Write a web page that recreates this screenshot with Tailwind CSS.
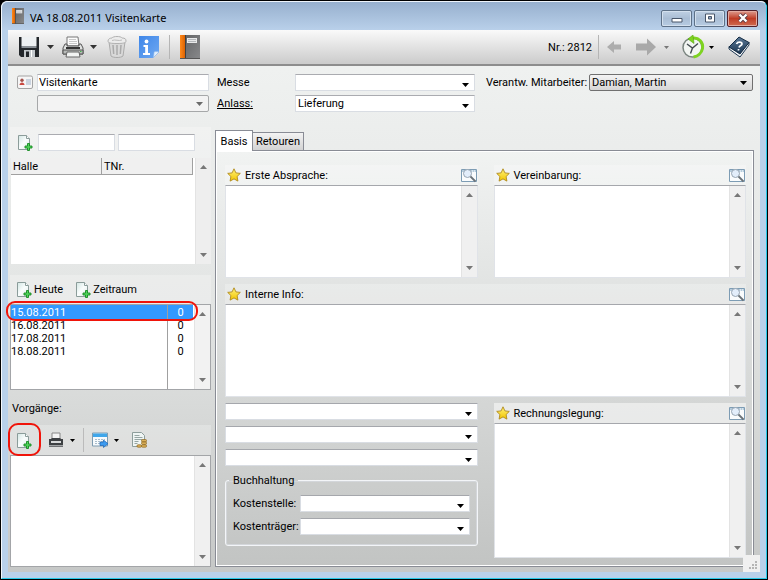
<!DOCTYPE html>
<html lang="de">
<head>
<meta charset="utf-8">
<title>VA 18.08.2011 Visitenkarte</title>
<script src="https://cdn.jsdelivr.net/npm/@tailwindcss/browser@4"></script>
</head>
<body class="bg-black font-[Roboto,'Liberation_Sans',sans-serif] text-[11px] leading-[13px] text-black">
<svg class="absolute h-0 w-0" aria-hidden="true">
  <defs>
    <linearGradient id="paper" x1="0" y1="0" x2="1" y2="1"><stop offset="0" stop-color="#d3e6e3"/><stop offset=".5" stop-color="#fafdfd"/><stop offset="1" stop-color="#dfeae8"/></linearGradient>
    <linearGradient id="gold" x1="0" y1="0" x2="0" y2="1"><stop offset="0" stop-color="#fff27a"/><stop offset="1" stop-color="#f2c500"/></linearGradient>
    <linearGradient id="orange" x1="0" y1="0" x2="1" y2="0"><stop offset="0" stop-color="#ff8a1c"/><stop offset="1" stop-color="#d95f00"/></linearGradient>
    <linearGradient id="grey" x1="0" y1="0" x2="1" y2="1"><stop offset="0" stop-color="#636466"/><stop offset="1" stop-color="#88898b"/></linearGradient>
    <linearGradient id="navy" x1="0" y1="0" x2="0" y2="1"><stop offset="0" stop-color="#5b7997"/><stop offset="1" stop-color="#1b3550"/></linearGradient>
    <linearGradient id="info" x1="0" y1="0" x2="1" y2="1"><stop offset="0" stop-color="#3e86e8"/><stop offset="1" stop-color="#6fa9f2"/></linearGradient>
  </defs>
  <symbol id="add" viewBox="0 0 16 17">
    <path d="M1.5 1.5h8l3 3v11h-11z" fill="url(#paper)" stroke="#8b9c9a"/><path d="M9.5 1.5v3h3" fill="#fff" stroke="#8b9c9a"/>
    <path d="M10.500 9.500h2v2.500h2.500v2h-2.500v2.500h-2v-2.500h-2.500v-2h2.500z" fill="#4fd45a" stroke="#168a22" stroke-width=".9"/>
  </symbol>
  <symbol id="star" viewBox="0 0 14 14"><path d="M7 .8 8.900 4.900l4.400.5-3.200 3.100.8 4.600L7 10.900l-3.900 2.200.8-4.600L.7 5.400l4.400-.5z" fill="url(#gold)" stroke="#b08a1c" stroke-width=".9" stroke-linejoin="round"/></symbol>
  <symbol id="lens" viewBox="0 0 16 15">
    <path d="M.5 1.500h15v12H.5z" fill="#fafcfd" stroke="#7d9cb4"/><path d="M1 2h14v2H1z" fill="#b5ccdc"/><path d="M11 3h1m1 0h1" stroke="#fff"/>
    <circle cx="6.500" cy="5.500" r="4" fill="#e3eefb" stroke="#98a6b3"/><path d="m9.500 8.500 5 5" stroke="#6b7278" stroke-width="1.800"/>
  </symbol>
  <symbol id="down" viewBox="0 0 7 4"><path d="M0 0h7L3.500 4z" fill="currentColor"/></symbol>
  <symbol id="up" viewBox="0 0 7 4"><path d="M0 4h7L3.500 0z" fill="currentColor"/></symbol>
  <symbol id="book" viewBox="0 0 20 24">
    <path d="M0 0h5.500v24H0z" fill="url(#orange)"/><path d="M5 0h15v24H5z" fill="url(#grey)"/><path d="M5 0h1v24H5z" fill="#3f4042"/>
    <path d="M7 3h10v5H7z" fill="#e7e8e9"/><path d="M8 4.500h8m-8 2h8" stroke="#b5b8bb"/><path d="M0 23h20v1H0z" fill="#555"/>
  </symbol>
  <symbol id="printer" viewBox="0 0 22 22">
    <path d="M5 10V1h11l1 9z" fill="#fcfcfc" stroke="#777"/><path d="M7 3.500h7m-7 2h8m-8 2h8" stroke="#c9c9c9"/>
    <path d="M3 8h2v2h12V8h2l2 4v6H1v-6z" fill="#dfe1e0" stroke="#555"/><path d="M4 11h14v2H4z" fill="#333"/>
    <path d="M1 14h20v4H1z" fill="#b8bbb9" stroke="#555"/><path d="M5 16h12l1 5H4z" fill="#f2f4f3" stroke="#666"/><path d="M18 15.500h1.500" stroke="#43b649"/>
  </symbol>
</svg>

<div class="flex min-h-screen flex-col rounded-t-lg border border-black bg-[#b9d1ea]">
<div class="flex flex-1 flex-col rounded-t-md border border-t-[#eef4fb] border-r-[#27c9e8] border-b-[#27c9e8] border-l-[#f4f8fc]">

  <header class="flex h-7 items-center rounded-t-md bg-linear-to-b from-[#97b0ce] to-[#b9d0ea] pr-2 pl-2.5">
    <svg class="h-4 w-3 shrink-0" viewBox="0 0 20 24" preserveAspectRatio="none"><use href="#book" width="20" height="24"/></svg>
    <h1 class="ml-1.5 flex-1 pt-0.5 font-['Noto_Sans',sans-serif] text-[11px]">VA 18.08.2011 Visitenkarte</h1>
    <div class="flex gap-0.5 pt-1">
      <button aria-label="Minimieren" class="flex h-[17px] w-[31px] items-center justify-center rounded-xs border border-[#5d7188] bg-linear-to-b from-[#bfd0e3] via-[#a9bdd4] to-[#b7cce3] shadow-[inset_0_0_0_1px_#d3e0ee]"><svg class="mt-1 h-2 w-3" viewBox="0 0 12 8"><path d="M1 2.500h10v3.500H1z" fill="#fff" stroke="#48566a"/></svg></button>
      <button aria-label="Maximieren" class="flex h-[17px] w-[31px] items-center justify-center rounded-xs border border-[#5d7188] bg-linear-to-b from-[#bfd0e3] via-[#a9bdd4] to-[#b7cce3] shadow-[inset_0_0_0_1px_#d3e0ee]"><svg class="h-2.5 w-3" viewBox="0 0 12 10"><path d="M1.500 1h9v8h-9z" fill="#fff" stroke="#48566a"/><path d="M4.500 3.500h3v2.500h-3z" fill="#8fa6c1" stroke="#48566a"/></svg></button>
      <button aria-label="Schließen" class="flex h-[17px] w-[31px] items-center justify-center rounded-xs border border-[#53202a] bg-linear-to-b from-[#dc9a8e] via-[#bf3b25] to-[#cf6a50] shadow-[inset_0_0_0_1px_#e3aaa0]"><svg class="h-2.5 w-3" viewBox="0 0 12 10"><path d="m2.500 1.500 7 7m0-7-7 7" stroke="#5a3a44" stroke-width="4"/><path d="m2.500 1.500 7 7m0-7-7 7" stroke="#fff" stroke-width="2.400"/></svg></button>
    </div>
  </header>

  <div class="relative mx-1.5 mb-1.5 flex flex-1 flex-col bg-linear-to-b from-[#f1f3f2] via-[#e3e5e4] to-[#c6c8c7]">

    <nav aria-label="Werkzeuge" class="flex h-9 items-center border-b-2 border-[#8d8d8d] bg-linear-to-b from-[#fafafa] to-[#cbcbcb] pr-2.5 pl-[11px]">
      <button aria-label="Speichern" class="flex items-center gap-2"><svg class="h-5 w-5" viewBox="0 0 20 20"><path d="M0 0h20v20H2l-2-2z" fill="#23272b"/><path d="M2.500 0h15v9h-15z" fill="#eef1f3"/><path d="M2.500 9h15v2h-15z" fill="#8b9197"/><path d="M5 13h11v7H5z" fill="#c3c8cc"/><path d="M7 14.500h3V20H7z" fill="#23272b"/><path d="M12 13h1v7h-1z" fill="#fff"/></svg><svg class="h-1 w-[7px] text-[#333]"><use href="#down"/></svg></button>
      <button aria-label="Drucken" class="ml-2 flex items-center gap-1.5"><svg class="h-[22px] w-[22px]"><use href="#printer"/></svg><svg class="h-1 w-[7px] text-[#333]"><use href="#down"/></svg></button>
      <button aria-label="Löschen" class="ml-2.5"><svg class="h-[22px] w-5" viewBox="0 0 20 22"><path d="m2 6 2 14c2 2 10 2 12 0l2-14z" fill="#d9d9d9" stroke="#ababab"/><path d="m6 9 .7 9M10 9v10m4-10-.7 9" stroke="#aaa" stroke-width="1.500"/><path d="M1 5c0-2 2-3 4-3 1-2 9-2 10 0 3 0 4 1 4 3s-3 2.500-9 2.500S1 7 1 5z" fill="#ececec" stroke="#b1b1b1"/><path d="M5 4.500c3-1.500 7 1 10-.5" fill="none" stroke="#bdbdbd"/></svg></button>
      <button aria-label="Info" class="ml-3"><svg class="h-[22px] w-5" viewBox="0 0 20 22"><path d="M0 0h20v16l-6 6H0z" fill="url(#info)"/><path d="M20 16c-3-1-5 0-5 0s0 4-1 6z" fill="#e2effd" stroke="#8bb5ea" stroke-width=".6"/><circle cx="7.500" cy="5.500" r="1.900" fill="#fff"/><path d="M4.500 9h4.500v8h2v2h-7v-2h2.200v-6H4.500z" fill="#fff"/></svg></button>
      <span class="ml-2.5 h-6 w-px bg-[#b5b5b5]"></span>
      <button aria-label="Adressbuch" class="ml-2.5"><svg class="h-6 w-5"><use href="#book"/></svg></button>
      <span class="ml-auto">Nr.: 2812</span>
      <span class="ml-1.5 h-6 w-px bg-[#b5b5b5]"></span>
      <button aria-label="Zurück" class="ml-2"><svg class="h-3.5 w-3.5" viewBox="0 0 14 14"><path d="M0 7l7-6v3.500h7v5H7V13z" fill="#adadad"/></svg></button>
      <button aria-label="Vor" class="ml-3.5 flex items-center gap-2"><svg class="h-[18px] w-[21px]" viewBox="0 0 21 18"><path d="M21 9 12 .5v5H1v7h11v5z" fill="#a9a9a9"/></svg><svg class="h-[3px] w-[5px] text-[#777]"><use href="#down"/></svg></button>
      <button aria-label="Verlauf" class="ml-3 flex items-center gap-1"><svg class="h-6 w-6" viewBox="0 0 24 24"><circle cx="11.500" cy="12.500" r="9.500" fill="#f3f6f3" stroke="#7b8580" stroke-width="1.500"/><path d="M10 3.500c8-2 12.500 4 11.500 10-1 5-5 8-9 8.500" fill="none" stroke="#7ed321" stroke-width="3"/><path d="M12 0 7 4l6 4.500z" fill="#7ed321" stroke="#55a40d" stroke-width=".6"/><path d="m6 9 5.500 4 5.500-4.500M11.500 13l-2 5.500" fill="none" stroke="#444b50" stroke-width="1.400"/></svg><svg class="h-[3px] w-[5px]"><use href="#down"/></svg></button>
      <button aria-label="Hilfe" class="ml-3.5"><svg class="h-[22px] w-[22px]" viewBox="0 0 22 22"><path d="m1 13 11 8 9-12v-2.500L12 17 1 10.500z" fill="#f4f6f8" stroke="#1b3550"/><path d="M1 11 11 1l10 5.500L12 18z" fill="url(#navy)" stroke="#152c44"/><path d="M8.500 8c1-2.500 5.500-2.500 5.500 0 0 1.500-2.500 1.500-3 3.500m-.4 1.500-.2 1.500" fill="none" stroke="#fff" stroke-width="1.700"/></svg></button>
    </nav>

    <form class="flex flex-col pt-2 pr-1.5 pb-2 pl-0.5">
      <div class="flex items-start">
        <div class="flex w-[199px] shrink-0 flex-col gap-1 pl-[7px]">
          <div class="flex items-center gap-1">
            <svg class="h-[15px] w-4 shrink-0" viewBox="0 0 16 15" aria-hidden="true"><rect x=".5" y="1" width="15" height="12.500" rx="1.500" fill="#f6f6f6" stroke="#a3a3a3"/><circle cx="5" cy="5.200" r="1.700" fill="#a3524c"/><path d="M2.500 10c0-3.500 5-3.500 5 0z" fill="#c9473f"/><path d="M9 5h5M9 7h5M9 9h5" stroke="#9fb2c9"/></svg>
            <input aria-label="Bezeichnung" value="Visitenkarte" class="h-[17px] min-w-0 flex-1 border border-[#d9dde3] border-t-[#aaabb0] bg-white px-px">
          </div>
          <div class="ml-5 grid">
            <select aria-label="Unterart" class="col-start-1 row-start-1 h-[17px] w-full appearance-none rounded-xs border border-[#a6a8a9] bg-[#f3f3f3]"><option></option></select>
            <svg class="pointer-events-none col-start-1 row-start-1 mr-1.5 h-1 w-[7px] self-center justify-self-end text-[#6b6b6b]"><use href="#down"/></svg>
          </div>
        </div>
        <div class="ml-2 grid flex-1 grid-cols-[78px_minmax(0,1fr)] items-center gap-y-1">
          <label for="messe">Messe</label>
          <div class="grid"><select id="messe" class="col-start-1 row-start-1 h-[17px] w-full appearance-none border border-[#d9dde3] border-t-[#aaabb0] bg-white px-0.5"><option></option></select><svg class="pointer-events-none col-start-1 row-start-1 mt-1 mr-1.5 h-1 w-[7px] self-center justify-self-end"><use href="#down"/></svg></div>
          <label for="anlass" class="underline">Anlass:</label>
          <div class="grid"><select id="anlass" class="col-start-1 row-start-1 h-[17px] w-full appearance-none border border-[#d9dde3] border-t-[#aaabb0] bg-white px-0.5"><option>Lieferung</option></select><svg class="pointer-events-none col-start-1 row-start-1 mt-1 mr-1.5 h-1 w-[7px] self-center justify-self-end"><use href="#down"/></svg></div>
        </div>
        <label for="mit" class="ml-[11px] w-[103px] pt-0.5 whitespace-nowrap">Verantw. Mitarbeiter:</label>
        <div class="mr-px grid w-[164px]"><select id="mit" class="col-start-1 row-start-1 h-[17px] w-full appearance-none rounded-xs border border-[#707070] bg-linear-to-b from-[#f4f4f4] to-[#d6d6d6] px-0.5"><option>Damian, Martin</option></select><svg class="pointer-events-none col-start-1 row-start-1 mr-1.5 h-1 w-[7px] self-center justify-self-end"><use href="#down"/></svg></div>
      </div>
    </form>

    <div class="flex flex-1 pt-1.5 pr-1.5 pb-[5px] pl-0.5">
      <aside class="flex w-[201px] shrink-0 flex-col pt-px">
        <div class="flex h-[31px] items-center gap-[3px] bg-white/25 pr-4 pl-[7px]">
          <button aria-label="Halle hinzufügen" class="mr-0.5"><svg class="h-[17px] w-4"><use href="#add"/></svg></button>
          <input aria-label="Halle" class="h-[17px] min-w-0 flex-1 border border-[#d9dde3] border-t-[#aaabb0] bg-white">
          <input aria-label="TNr." class="h-[17px] min-w-0 flex-1 border border-[#d9dde3] border-t-[#aaabb0] bg-white">
        </div>
        <div class="ml-px flex h-[106px] bg-white">
          <div class="flex-1"><table class="w-[182px] table-fixed border-separate border-spacing-0 bg-[#f0f0f0] text-left"><thead><tr><th class="h-[17px] border-r border-b border-[#a0a0a0] px-0.5 py-0 font-normal">Halle</th><th class="h-[17px] border-r border-b border-[#a0a0a0] px-0.5 py-0 font-normal">TNr.</th></tr></thead></table></div>
          <div class="flex w-4 flex-col items-center justify-between border-l border-[#e3e3e3] bg-[#eee] py-[7px] text-[#777]"><svg class="h-1 w-[7px]"><use href="#up"/></svg><svg class="h-1 w-[7px]"><use href="#down"/></svg></div>
        </div>

        <div class="mt-[11px] flex h-[29px] items-center gap-3 bg-white/25 pl-1.5">
          <button class="flex items-center gap-0.5"><svg class="h-[17px] w-4"><use href="#add"/></svg>Heute</button>
          <button class="flex items-center gap-0.5"><svg class="h-[17px] w-4"><use href="#add"/></svg>Zeitraum</button>
        </div>
        <div class="relative flex h-[86px] border border-[#a3a5a8] bg-white">
          <div class="flex flex-1 items-start">
            <table class="h-full w-[182px] table-fixed border-separate border-spacing-0">
              <colgroup><col class="w-[157px]"><col class="w-[25px]"></colgroup>
              <tbody>
                <tr class="bg-[#3399ff] text-white"><td class="h-3.5 border-r border-[#a0a0a0] p-0">15.08.2011</td><td class="p-0 text-center">0</td></tr>
                <tr><td class="h-[13px] border-r border-[#a0a0a0] p-0">16.08.2011</td><td class="p-0 text-center">0</td></tr>
                <tr><td class="h-[13px] border-r border-[#a0a0a0] p-0">17.08.2011</td><td class="p-0 text-center">0</td></tr>
                <tr><td class="h-[13px] border-r border-[#a0a0a0] p-0">18.08.2011</td><td class="p-0 text-center">0</td></tr>
              </tbody>
              <tfoot><tr><td class="h-[31px] border-r border-[#a0a0a0] p-0"></td><td class="p-0"></td></tr></tfoot>
            </table>
          </div>
          <div class="flex w-4 flex-col items-center justify-between border-l border-[#e3e3e3] bg-[#f2f2f2] py-[7px] text-[#777]"><svg class="h-1 w-[7px]"><use href="#up"/></svg><svg class="h-1 w-[7px]"><use href="#down"/></svg></div>
          <span class="pointer-events-none absolute -top-1 -left-[5px] h-[20px] w-[192px] rounded-[9px] border-2 border-[#f0140a]"></span>
        </div>

        <h2 id="vorg" class="mt-3 ml-0.5">Vorgänge:</h2>
        <div class="relative mt-2.5 flex h-[30px] items-center bg-white/25 pl-1.5">
          <button aria-label="Vorgang hinzufügen"><svg class="h-[17px] w-4"><use href="#add"/></svg></button>
          <button aria-label="Vorgänge drucken" class="ml-4 flex items-center gap-1.5"><svg class="h-4 w-4" viewBox="0 0 16 16"><path d="M4 7V1h8v6" fill="#f4f4f4" stroke="#888"/><path d="M1 7h2l1-1h8l1 1h2v8H1z" fill="#3e4144"/><path d="M3 9h10v2H3z" fill="#d9dbdc"/><path d="M1 13h14v1.500H1z" fill="#a2a5a7"/></svg><svg class="h-[3px] w-[5px]"><use href="#down"/></svg></button>
          <span class="ml-2 h-6 w-px bg-[#bbb]"></span>
          <button aria-label="Ansicht" class="ml-2 flex items-center gap-1.5"><svg class="h-4 w-4" viewBox="0 0 16 16"><path d="M.5 1h15v13H.5z" fill="#f7fafc" stroke="#7e9bb0"/><path d="M1 1.500h14V5H1z" fill="#3fa6ea"/><path d="M3 7.500h10M3 9.500h10M3 11.500h6" stroke="#a9bccb" stroke-dasharray="2 1"/><path d="M8 10h3.500V8L16 11.700 11.500 15.500v-2H8z" fill="#3d9bf0" stroke="#1c63b0" stroke-width=".7"/></svg><svg class="h-[3px] w-[5px]"><use href="#down"/></svg></button>
          <button aria-label="Rechnung" class="ml-3"><svg class="h-4 w-4" viewBox="0 0 16 16"><path d="M1.500.5h9l3 3v11h-12z" fill="#eff5f4" stroke="#8d9d9b"/><path d="M3.500 3.500h5m-5 2h8m-8 2h8m-8 2h4m-4 2h3" stroke="#96a5a3"/><g fill="#dcb15a" stroke="#8b6520" stroke-width=".7"><rect x="10.500" y="7.500" width="5" height="2.400" rx="1"/><rect x="10.500" y="10" width="5" height="2.400" rx="1"/><rect x="10.500" y="12.800" width="5" height="2.400" rx="1"/><rect x="6" y="12.800" width="4.500" height="2.400" rx="1"/></g></svg></button>
          <span class="pointer-events-none absolute -top-0.5 -left-0.5 h-[33px] w-[33px] rounded-[10px] border-2 border-[#f0140a]"></span>
        </div>
        <div class="flex flex-1 border border-[#a3a5a8] bg-white">
          <ul aria-labelledby="vorg" class="flex-1"></ul>
          <div class="flex w-4 flex-col items-center justify-between border-l border-[#e3e3e3] bg-[#f0f0f0] py-[7px] text-[#777]"><svg class="h-1 w-[7px]"><use href="#up"/></svg><svg class="h-1 w-[7px]"><use href="#down"/></svg></div>
        </div>
      </aside>

      <main class="ml-1 flex min-w-0 flex-1 flex-col pt-1">
        <div role="tablist" class="z-10 -mb-px flex items-end">
          <button role="tab" aria-selected="true" class="h-[21px] w-[38px] border border-b-0 border-[#898c95] bg-white">Basis</button>
          <button role="tab" aria-selected="false" class="h-[19px] w-[51px] border border-l-0 border-[#898c95] bg-linear-to-b from-[#f3f3f3] to-[#d3d3d3]">Retouren</button>
        </div>
        <div role="tabpanel" class="grid flex-1 grid-cols-2 grid-rows-[113px_113px_1fr] gap-x-4 gap-y-1.5 border border-[#898c95] bg-linear-to-b from-[#f1f3f2] to-[#c2c4c3] px-[7px] pt-3.5 pb-2 shadow-[inset_0_0_0_1px_#fff] pl-[9px]">
          <section class="flex flex-col">
            <div class="flex h-5 items-center bg-white/25 pr-px pl-0.5"><svg class="h-3.5 w-3.5"><use href="#star"/></svg><label for="t1" class="ml-1 flex-1">Erste Absprache:</label><button aria-label="Erste Absprache öffnen"><svg class="h-[15px] w-4"><use href="#lens"/></svg></button></div>
            <div class="flex flex-1 border border-[#e0e3e8] border-t-[#a5a7ac] bg-white"><textarea id="t1" class="min-w-0 flex-1 resize-none"></textarea><div class="flex w-4 flex-col items-center justify-between border-l border-[#e3e3e3] bg-[#f0f0f0] py-[7px] text-[#777]"><svg class="h-1 w-[7px]"><use href="#up"/></svg><svg class="h-1 w-[7px]"><use href="#down"/></svg></div></div>
          </section>
          <section class="flex flex-col">
            <div class="flex h-5 items-center bg-white/25 pr-px pl-0.5"><svg class="h-3.5 w-3.5"><use href="#star"/></svg><label for="t2" class="ml-1 flex-1">Vereinbarung:</label><button aria-label="Vereinbarung öffnen"><svg class="h-[15px] w-4"><use href="#lens"/></svg></button></div>
            <div class="flex flex-1 border border-[#e0e3e8] border-t-[#a5a7ac] bg-white"><textarea id="t2" class="min-w-0 flex-1 resize-none"></textarea><div class="flex w-4 flex-col items-center justify-between border-l border-[#e3e3e3] bg-[#f0f0f0] py-[7px] text-[#777]"><svg class="h-1 w-[7px]"><use href="#up"/></svg><svg class="h-1 w-[7px]"><use href="#down"/></svg></div></div>
          </section>
          <section class="col-span-2 flex flex-col">
            <div class="flex h-5 items-center bg-white/25 pr-px pl-0.5"><svg class="h-3.5 w-3.5"><use href="#star"/></svg><label for="t3" class="ml-1 flex-1">Interne Info:</label><button aria-label="Interne Info öffnen"><svg class="h-[15px] w-4"><use href="#lens"/></svg></button></div>
            <div class="flex flex-1 border border-[#e0e3e8] border-t-[#a5a7ac] bg-white"><textarea id="t3" class="min-w-0 flex-1 resize-none"></textarea><div class="flex w-4 flex-col items-center justify-between border-l border-[#e3e3e3] bg-[#f0f0f0] py-[7px] text-[#777]"><svg class="h-1 w-[7px]"><use href="#up"/></svg><svg class="h-1 w-[7px]"><use href="#down"/></svg></div></div>
          </section>
          <div class="flex flex-col gap-1.5">
            <div class="grid"><select aria-label="Auswahl 1" class="col-start-1 row-start-1 h-[17px] w-full appearance-none border border-[#d9dde3] border-t-[#a5a7ac] bg-white"><option></option></select><svg class="pointer-events-none col-start-1 row-start-1 mt-1 mr-1.5 h-1 w-[7px] self-center justify-self-end"><use href="#down"/></svg></div>
            <div class="grid"><select aria-label="Auswahl 2" class="col-start-1 row-start-1 h-[17px] w-full appearance-none border border-[#d9dde3] border-t-[#a5a7ac] bg-white"><option></option></select><svg class="pointer-events-none col-start-1 row-start-1 mt-1 mr-1.5 h-1 w-[7px] self-center justify-self-end"><use href="#down"/></svg></div>
            <div class="grid"><select aria-label="Auswahl 3" class="col-start-1 row-start-1 h-[17px] w-full appearance-none border border-[#d9dde3] border-t-[#a5a7ac] bg-white"><option></option></select><svg class="pointer-events-none col-start-1 row-start-1 mt-1 mr-1.5 h-1 w-[7px] self-center justify-self-end"><use href="#down"/></svg></div>
            <fieldset class="mt-0.5 grid grid-cols-[67px_minmax(0,1fr)] items-center gap-y-1.5 rounded-[3px] border border-[#f3f5f8] px-[7px] pt-2 pb-2.5 shadow-[inset_0_0_0_1px_#d3d6da]">
              <legend class="-ml-1 px-1">Buchhaltung</legend>
              <label for="ks">Kostenstelle:</label>
              <div class="grid"><select id="ks" class="col-start-1 row-start-1 h-[17px] w-full appearance-none border border-[#d9dde3] border-t-[#a5a7ac] bg-white"><option></option></select><svg class="pointer-events-none col-start-1 row-start-1 mt-1 mr-1.5 h-1 w-[7px] self-center justify-self-end"><use href="#down"/></svg></div>
              <label for="kt">Kostenträger:</label>
              <div class="grid"><select id="kt" class="col-start-1 row-start-1 h-[17px] w-full appearance-none border border-[#d9dde3] border-t-[#a5a7ac] bg-white"><option></option></select><svg class="pointer-events-none col-start-1 row-start-1 mt-1 mr-1.5 h-1 w-[7px] self-center justify-self-end"><use href="#down"/></svg></div>
            </fieldset>
          </div>
          <section class="flex flex-col">
            <div class="flex h-5 items-center bg-white/50 pr-px pl-0.5"><svg class="h-3.5 w-3.5"><use href="#star"/></svg><label for="t4" class="ml-1 flex-1">Rechnungslegung:</label><button aria-label="Rechnungslegung öffnen"><svg class="h-[15px] w-4"><use href="#lens"/></svg></button></div>
            <div class="flex flex-1 border border-[#e0e3e8] border-t-[#a5a7ac] bg-white"><textarea id="t4" class="min-w-0 flex-1 resize-none"></textarea><div class="flex w-4 flex-col items-center justify-between border-l border-[#e3e3e3] bg-[#f0f0f0] py-[7px] text-[#777]"><svg class="h-1 w-[7px]"><use href="#up"/></svg><svg class="h-1 w-[7px]"><use href="#down"/></svg></div></div>
          </section>
        </div>
      </main>
    </div>
    <div class="absolute right-0 bottom-0 flex h-[17px] w-[17px] items-end justify-end bg-[#f0f0f0] p-0.5" aria-hidden="true"><svg class="h-2.5 w-2.5" viewBox="0 0 10 10" fill="#b5b5b5"><path d="M7 1h2v2H7zM4 4h2v2H4zM7 4h2v2H7zM1 7h2v2H1zM4 7h2v2H4zM7 7h2v2H7z"/></svg></div>
  </div>
</div>
</div>
</body>
</html>
